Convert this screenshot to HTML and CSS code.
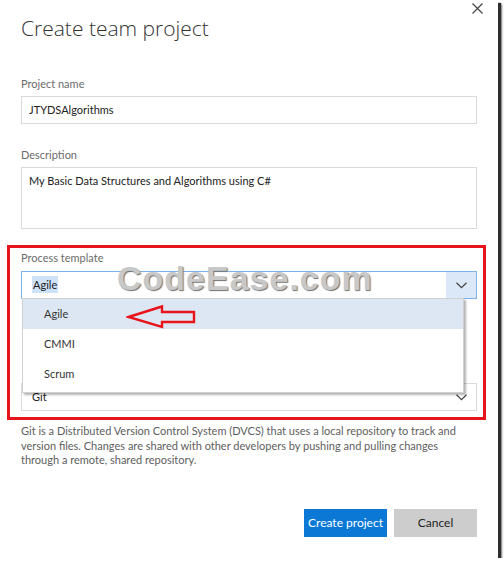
FILE: index.html
```html
<!DOCTYPE html>
<html lang="en">
<head>
    <meta charset="UTF-8">
    <title>Create team project</title>
    <link rel="stylesheet" href="styles.css">
</head>
<body>

    <div class="dialog">
        <div class="dialog-header">
            <h1 class="title">Create team project</h1>
            <button class="close" aria-label="Close">
                <svg width="11" height="11" viewBox="0 0 11 11"><path d="M0.5 0.5L10.5 10.5M10.5 0.5L0.5 10.5" stroke="#444" stroke-width="1.2" fill="none"/></svg>
            </button>
        </div>

        <div class="field">
            <label class="label">Project name</label>
            <div class="input">JTYDSAlgorithms</div>
        </div>

        <div class="field">
            <label class="label">Description</label>
            <div class="input textarea">My Basic Data Structures and Algorithms using C#</div>
        </div>

        <!-- 红框标注 -->
        <div class="highlight">
            <div class="field field-tight">
                <label class="label">Process template</label>
                <div class="select open">
                    <span class="select-value"><span class="selected-text">Agile</span></span>
                    <span class="select-arrow">
                        <svg width="11" height="7" viewBox="0 0 11 7"><path d="M0.5 0.8L5.5 5.6L10.5 0.8" stroke="#444" stroke-width="1.2" fill="none"/></svg>
                    </span>
                    <ul class="dropdown">
                        <li class="active">Agile</li>
                        <li>CMMI</li>
                        <li>Scrum</li>
                    </ul>
                </div>
            </div>
            <!-- 版本控制（标签被下拉列表遮住） -->
            <div class="field field-version">
                <div class="select">
                    <span class="select-value">Git</span>
                    <span class="select-arrow">
                        <svg width="11" height="7" viewBox="0 0 11 7"><path d="M0.5 0.8L5.5 5.6L10.5 0.8" stroke="#444" stroke-width="1.2" fill="none"/></svg>
                    </span>
                </div>
            </div>
        </div>

        <p class="help">Git is a Distributed Version Control System (DVCS) that uses a local repository to track and version files. Changes are shared with other developers by pushing and pulling changes through a remote, shared repository.</p>

        <div class="actions">
            <button class="btn btn-primary">Create project</button>
            <button class="btn">Cancel</button>
        </div>

        <!-- 水印和箭头 -->
        <div class="watermark">CodeEase.com</div>
        <svg class="arrow" width="72" height="26" viewBox="126 304 72 26">
            <polygon points="128.5,317 162,306.5 162,312 194,312 194,322 162,322 162,327" fill="none" stroke="#e8141c" stroke-width="2.4" stroke-linejoin="miter"/>
        </svg>
    </div>

</body>
</html>
```

FILE: styles.css
```css
body {
    margin: 0;
    background: #fff;
    font-family: Lato, "Open Sans", Arial, sans-serif;
}
.dialog {
    position: relative;
    box-sizing: border-box;
    width: 498px;
    height: 558px;
    padding: 0 21px;
    background: #fff;
    box-shadow: 3px 3px 1px #2e2e2e, 4px 4px 2px #888;
}
.dialog-header {
    display: flex;
    justify-content: space-between;
    align-items: flex-start;
}
.title {
    margin: 13px 0 0;
    font-family: "Open Sans", Lato, sans-serif;
    font-weight: 300;
    font-size: 21px;
    line-height: 30px;
    color: #333;
}
.close {
    margin: 3px -6px 0 0;
    padding: 0;
    border: none;
    background: none;
    width: 11px;
    height: 11px;
    display: flex;
}
.field {
    margin-top: 23px;
}
.dialog-header + .field {
    margin-top: 33px;
}
.label {
    display: block;
    font-size: 11px;
    line-height: 16px;
    color: #6b6b6b;
    margin-bottom: 4px;
}
.input {
    box-sizing: border-box;
    height: 28px;
    padding: 0 7px;
    border: 1px solid #dadada;
    font-size: 11px;
    line-height: 26px;
    color: #222;
}
.textarea {
    height: 62px;
    padding-top: 5px;
    line-height: 16px;
}
.highlight {
    margin: 16px -9px 0 -14px;
    padding: 2px 6px 6px 11px;
    border: 3px solid #e8141c;
}
.field-tight {
    margin-top: 0;
}
.field-tight .label {
    margin-bottom: 5px;
}
.field-version {
    margin-top: 84px;
}
.select {
    position: relative;
    box-sizing: border-box;
    height: 28px;
    display: flex;
    border: 1px solid #dadada;
    font-size: 11px;
    color: #222;
}
.select.open {
    border-color: #7fb2e8;
}
.select-value {
    flex: 1;
    padding-left: 10px;
    line-height: 26px;
}
.selected-text {
    background: #cde1f7;
    padding: 2px 1px;
}
.select-arrow {
    width: 30px;
    display: flex;
    align-items: center;
    justify-content: center;
}
.select.open .select-arrow {
    background: #dbe8f8;
}
.dropdown {
    position: absolute;
    top: 100%;
    left: 0;
    z-index: 5;
    width: 440px;
    margin: 0;
    padding: 0 0 3px;
    list-style: none;
    background: #fff;
    border: 1px solid #d0d0d0;
    box-shadow: 2px 2px 2px rgba(0, 0, 0, 0.3);
}
.dropdown li {
    height: 30px;
    line-height: 30px;
    padding-left: 21px;
    color: #333;
}
.dropdown li.active {
    background: #dde7f4;
}
.help {
    margin: 4px 0 0;
    font-size: 11px;
    line-height: 14.5px;
    color: #5e5e5e;
}
.actions {
    display: flex;
    justify-content: flex-end;
    gap: 7px;
    margin-top: 41px;
}
.btn {
    width: 83px;
    height: 28px;
    padding: 0;
    border: none;
    background: #cdcdcd;
    color: #222;
    font-family: inherit;
    font-size: 12px;
    white-space: nowrap;
}
.btn-primary {
    background: #0a78d4;
    color: #fff;
}
.watermark {
    position: absolute;
    left: 117px;
    top: 261px;
    z-index: 10;
    font-family: "Liberation Sans", Arial, sans-serif;
    font-weight: bold;
    font-size: 34px;
    line-height: 34px;
    letter-spacing: 1px;
    color: #c8c8c8;
    text-shadow: 1px 1px 1px #707070;
}
.arrow {
    position: absolute;
    left: 126px;
    top: 304px;
    z-index: 10;
}
```
